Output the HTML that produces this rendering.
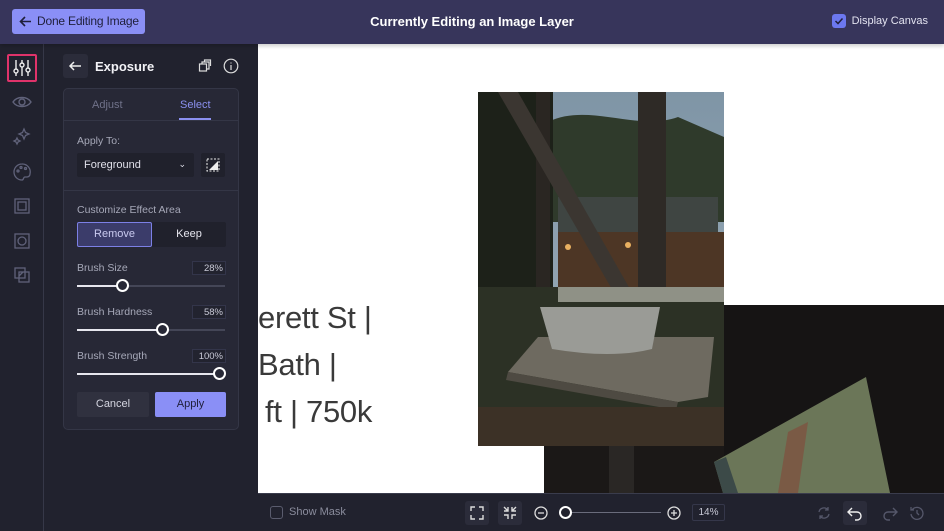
<!DOCTYPE html>
<html><head><meta charset="utf-8"><style>
*{box-sizing:border-box;margin:0;padding:0}
body{width:944px;height:531px;overflow:hidden;font-family:"Liberation Sans",sans-serif;background:#fff;position:relative}
.top{position:absolute;left:0;top:0;width:944px;height:44px;background:#37355b;box-shadow:0 2px 4px rgba(0,0,0,.2);z-index:5}
.done{position:absolute;left:12px;top:9px;width:133px;height:25px;background:#8a8ff6;border-radius:3px;color:#1f1f3a;font-size:12px;line-height:25px;padding-left:25px;white-space:nowrap;letter-spacing:-0.2px}
.done svg{position:absolute;left:7px;top:6px}
.title{position:absolute;left:0;width:944px;top:14px;text-align:center;color:#fff;font-size:13px;font-weight:bold}
.dc{position:absolute;right:16px;top:15px;color:#e3e3f0;font-size:11px}
.dc i{position:absolute;left:-20px;top:-1px;width:14px;height:14px;background:#6c78f0;border-radius:3px}
.rail{position:absolute;left:0;top:44px;width:44px;height:487px;background:#21222e;border-right:1px solid #363848}
.side{position:absolute;left:44px;top:44px;width:214px;height:487px;background:#21222e}
.ic{position:absolute;left:10px;width:24px;height:24px}
.panel{position:absolute;left:19px;top:44px;width:176px;height:342px;background:#272836;border:1px solid #343646;border-radius:5px}
.lbl{position:absolute;color:#a6a8b8;font-size:10.5px}
.val{position:absolute;right:12px;width:34px;height:14px;border:1px solid #33354a;color:#c8c9d6;font-size:9.5px;text-align:right;padding-right:2px;line-height:13px;background:#22232f}
.track{position:absolute;left:13px;width:148px;height:2px;background:#444657}
.track b{position:absolute;left:0;top:0;height:2px;background:#e6e6ee}
.track i{position:absolute;top:-6px;width:13px;height:13px;border-radius:50%;background:#272836;border:2px solid #fff;margin-left:-6px}
.canvas{position:absolute;left:258px;top:44px;width:686px;height:449px;background:#fff;overflow:hidden}
.bot{position:absolute;left:258px;top:493px;width:686px;height:38px;background:#21222e;border-top:1px solid #3a3c4c}
.big{position:absolute;left:0;font-size:31px;color:#3a3a3a;font-family:"Liberation Sans",sans-serif;font-weight:normal;letter-spacing:-0.3px}
.bb{position:absolute;top:7px;width:24px;height:24px;border-radius:3px}
</style></head><body>
<div class="top">
 <div class="done"><svg width="13" height="13" viewBox="0 0 13 13"><path d="M12 6.5H2M6 2L1.5 6.5 6 11" stroke="#1f1f3a" stroke-width="1.6" fill="none"/></svg>Done Editing Image</div>
 <div class="title">Currently Editing an Image Layer</div>
 <div class="dc"><i><svg width="14" height="14" viewBox="0 0 14 14"><path d="M3.5 7l2.5 2.5 4.5-5" stroke="#1f1f3a" stroke-width="1.5" fill="none"/></svg></i>Display Canvas</div>
</div>
<div class="rail">
 <div style="position:absolute;left:7px;top:10px;width:30px;height:28px;border:2px solid #e0336a;border-radius:2px"></div>
 <svg class="ic" style="top:12px" viewBox="0 0 24 24" fill="none" stroke="#eee" stroke-width="1.4"><path d="M6 4v16M12 4v16M18 4v16"/><circle cx="6" cy="15" r="2" fill="#21222e"/><circle cx="12" cy="9" r="2" fill="#21222e"/><circle cx="18" cy="14" r="2" fill="#21222e"/></svg>
 <svg class="ic" style="top:46px" viewBox="0 0 24 24" fill="none" stroke="#60627a" stroke-width="1.4"><path d="M3 12c4-6 14-6 18 0-4 6-14 6-18 0z"/><circle cx="12" cy="12" r="3"/></svg>
 <svg class="ic" style="top:81px" viewBox="0 0 24 24" fill="none" stroke="#60627a" stroke-width="1.3"><path d="M14 4l1.5 3.5L19 9l-3.5 1.5L14 14l-1.5-3.5L9 9l3.5-1.5z"/><path d="M7 13l1 2 2 1-2 1-1 2-1-2-2-1 2-1z"/></svg>
 <svg class="ic" style="top:116px" viewBox="0 0 24 24" fill="none" stroke="#60627a" stroke-width="1.3"><path d="M12 4a8 8 0 1 0 0 16c2 0 1-3 3-3h2a3 3 0 0 0 3-3 8 8 0 0 0-8-10z"/><circle cx="8" cy="11" r="1"/><circle cx="11" cy="7.5" r="1"/><circle cx="15.5" cy="8.5" r="1"/></svg>
 <svg class="ic" style="top:150px" viewBox="0 0 24 24" fill="none" stroke="#60627a" stroke-width="1.3"><rect x="5" y="5" width="14" height="14"/><rect x="8" y="8" width="8" height="8"/></svg>
 <svg class="ic" style="top:185px" viewBox="0 0 24 24" fill="none" stroke="#60627a" stroke-width="1.3"><rect x="5" y="5" width="14" height="14"/><circle cx="12" cy="12" r="4"/></svg>
 <svg class="ic" style="top:219px" viewBox="0 0 24 24" fill="none" stroke="#60627a" stroke-width="1.3"><rect x="5" y="5" width="10" height="10"/><rect x="9" y="9" width="10" height="10"/><path d="M9 13l4-4"/></svg>
</div>
<div class="side">
 <div style="position:absolute;left:19px;top:10px;width:25px;height:24px;background:#2b2c3a;border-radius:3px"><svg width="25" height="24" viewBox="0 0 25 24"><path d="M18 12H7M11 8l-4 4 4 4" stroke="#eee" stroke-width="1.5" fill="none"/></svg></div>
 <div style="position:absolute;left:51px;top:15px;color:#f2f2f6;font-size:13px;font-weight:bold">Exposure</div>
 <svg style="position:absolute;left:154px;top:15px" width="14" height="14" viewBox="0 0 14 14" fill="none" stroke="#ddd" stroke-width="1.2"><rect x="1.5" y="5" width="7" height="7"/><path d="M4 5V3h7v7h-2.5M6.5 3V1h6v6"/></svg>
 <svg style="position:absolute;left:179px;top:14px" width="16" height="16" viewBox="0 0 16 16" fill="none" stroke="#ddd" stroke-width="1.2"><circle cx="8" cy="8" r="6.8"/><path d="M8 7v5M8 4.5v1"/></svg>
 <div class="panel">
  <div style="position:absolute;left:0;top:0;width:100%;height:32px;border-bottom:1px solid #343646"></div>
  <div class="lbl" style="left:28px;top:10px;color:#70728a;font-size:11px">Adjust</div>
  <div class="lbl" style="left:116px;top:10px;color:#8b90f0;font-size:11px">Select</div>
  <div style="position:absolute;left:115px;top:29px;width:32px;height:2px;background:#8b90f0"></div>
  <div class="lbl" style="left:13px;top:46px">Apply To:</div>
  <div style="position:absolute;left:13px;top:64px;width:117px;height:24px;background:#20212c;border-radius:2px;color:#e0e0ea;font-size:11px;line-height:24px;padding-left:7px">Foreground<span style="position:absolute;right:8px;top:-1px;font-size:9px">⌄</span></div>
  <div style="position:absolute;left:137px;top:64px;width:24px;height:24px;background:#20212c;border-radius:2px"><svg width="24" height="24" viewBox="0 0 24 24"><rect x="6" y="6" width="12" height="12" fill="none" stroke="#eee" stroke-dasharray="2 1.5"/><path d="M8 17l9-9v9z" fill="#eee"/></svg></div>
  <div style="position:absolute;left:0;top:101px;width:100%;height:1px;background:#343646"></div>
  <div class="lbl" style="left:13px;top:115px">Customize Effect Area</div>
  <div style="position:absolute;left:13px;top:133px;width:149px;height:25px;background:#20212c;border-radius:2px"></div>
  <div style="position:absolute;left:13px;top:133px;width:75px;height:25px;background:#3b3c6a;border:1px solid #7c80e6;border-radius:2px;color:#c9caf0;font-size:11px;text-align:center;line-height:23px">Remove</div>
  <div style="position:absolute;left:88px;top:133px;width:74px;height:25px;color:#e5e5ee;font-size:11px;text-align:center;line-height:25px">Keep</div>
  <div class="lbl" style="left:13px;top:173px">Brush Size</div><div class="val" style="top:172px">28%</div>
  <div class="track" style="top:196px"><b style="width:45px"></b><i style="left:45px"></i></div>
  <div class="lbl" style="left:13px;top:217px">Brush Hardness</div><div class="val" style="top:216px">58%</div>
  <div class="track" style="top:240px"><b style="width:85px"></b><i style="left:85px"></i></div>
  <div class="lbl" style="left:13px;top:261px">Brush Strength</div><div class="val" style="top:260px">100%</div>
  <div class="track" style="top:284px"><b style="width:142px"></b><i style="left:142px"></i></div>
  <div style="position:absolute;left:13px;top:303px;width:72px;height:25px;background:#30313f;border-radius:2px;color:#d4d5e0;font-size:11px;text-align:center;line-height:25px">Cancel</div>
  <div style="position:absolute;left:91px;top:303px;width:71px;height:25px;background:#8a8ff6;border-radius:2px;color:#1f1f3a;font-size:11px;text-align:center;line-height:25px">Apply</div>
 </div>
</div>
<div class="canvas">
 <div class="big" style="top:256px">erett St |</div>
 <div class="big" style="top:303px">Bath |</div>
 <div class="big" style="top:350px;left:7px">ft | 750k</div>
 <svg style="position:absolute;left:220px;top:48px" width="466" height="401" viewBox="0 0 466 401">
  <defs><linearGradient id="sky" x1="0" y1="0" x2="0" y2="1"><stop offset="0" stop-color="#7f95a6"/><stop offset="1" stop-color="#9fb0ba"/></linearGradient></defs>
  <rect x="0" y="0" width="246" height="354" fill="url(#sky)"/>
  <path d="M70 30C110 10 160 40 200 25L246 45V130H60z" fill="#2f3a2b"/>
  <rect x="0" y="0" width="75" height="354" fill="#1d2119"/>
  <rect x="80" y="105" width="160" height="40" fill="#3f4542"/>
  <rect x="80" y="140" width="166" height="55" fill="#4d3625"/>
  <circle cx="90" cy="155" r="3" fill="#e9b060"/><circle cx="150" cy="153" r="3" fill="#e9b060"/>
  <rect x="160" y="0" width="28" height="260" fill="#2e2a26"/>
  <rect x="58" y="0" width="14" height="354" fill="#2a2622"/>
  <path d="M20 0L40 0 165 220 150 225z" fill="#3b3631"/>
  <rect x="0" y="195" width="246" height="159" fill="#2c3125"/>
  <rect x="80" y="195" width="166" height="15" fill="#8f9186"/>
  <path d="M30 280L60 245 236 245 230 305 200 310z" fill="#6e6a60"/>
  <path d="M30 280L200 310 198 318 28 288z" fill="#4e4a42"/>
  <path d="M62 215h120l-8 42q-40 10-100 0z" fill="#9a9b96"/>
  <rect x="0" y="315" width="246" height="39" fill="#3c3126"/>
  <rect x="246" y="213" width="220" height="188" fill="#161414"/>
  <rect x="66" y="354" width="180" height="47" fill="#1b1817"/>
  <rect x="131" y="354" width="25" height="47" fill="#2a2725"/>
  <path d="M236 370L388 285 412 401 245 401z" fill="#6b7658"/>
  <path d="M236 370L248 365 260 401 245 401z" fill="#3c4a48"/>
  <path d="M300 401L310 340 330 330 320 401z" fill="#7a5a45"/>
 </svg>
</div>
<div class="bot">
 <div style="position:absolute;left:12px;top:12px;width:13px;height:13px;border:1px solid #5a5c6e;border-radius:3px"></div>
 <div style="position:absolute;left:31px;top:12px;color:#8a8c9c;font-size:11px">Show Mask</div>
 <div class="bb" style="left:207px;background:#2b2c3a"><svg width="24" height="24" viewBox="0 0 24 24" fill="none" stroke="#ddd" stroke-width="1.4"><path d="M6 10V6h4M14 6h4v4M18 14v4h-4M10 18H6v-4"/></svg></div>
 <div class="bb" style="left:240px;background:#2b2c3a"><svg width="24" height="24" viewBox="0 0 24 24" fill="none" stroke="#ddd" stroke-width="1.4"><path d="M6 10h4V6M14 6v4h4M18 14h-4v4M10 18v-4H6M6 6l4 4M18 6l-4 4"/></svg></div>
 <svg style="position:absolute;left:276px;top:12px" width="14" height="14" viewBox="0 0 14 14" fill="none" stroke="#ddd" stroke-width="1.3"><circle cx="7" cy="7" r="6"/><path d="M4 7h6"/></svg>
 <div style="position:absolute;left:307px;top:18px;width:96px;height:1px;background:#6a6c7c"></div>
 <div style="position:absolute;left:301px;top:12px;width:13px;height:13px;border-radius:50%;border:2px solid #fff;background:#21222e"></div>
 <svg style="position:absolute;left:409px;top:12px" width="14" height="14" viewBox="0 0 14 14" fill="none" stroke="#ddd" stroke-width="1.3"><circle cx="7" cy="7" r="6"/><path d="M4 7h6M7 4v6"/></svg>
 <div style="position:absolute;left:434px;top:10px;width:33px;height:17px;border:1px solid #35374a;border-radius:2px;color:#c8c9d6;font-size:10px;text-align:center;line-height:15px">14%</div>
 <svg style="position:absolute;left:558px;top:11px" width="16" height="16" viewBox="0 0 16 16" fill="none" stroke="#55576a" stroke-width="1.3"><path d="M3 7a5 5 0 0 1 9-2M13 9a5 5 0 0 1-9 2M12 2v3H9M4 14v-3h3"/></svg>
 <div class="bb" style="left:585px;background:#2b2c3a"><svg width="24" height="24" viewBox="0 0 24 24" fill="none" stroke="#eee" stroke-width="1.4"><path d="M9 7L5 11l4 4M5 11h9a4 4 0 0 1 0 8h-2"/></svg></div>
 <svg style="position:absolute;left:620px;top:7px" width="24" height="24" viewBox="0 0 24 24" fill="none" stroke="#55576a" stroke-width="1.4"><path d="M15 7l4 4-4 4M19 11h-9a4 4 0 0 0 0 8h2"/></svg>
 <svg style="position:absolute;left:651px;top:11px" width="16" height="16" viewBox="0 0 16 16" fill="none" stroke="#55576a" stroke-width="1.3"><path d="M3 5a6 6 0 1 1-1 4M2 2v3h3M8 5v3l2 2"/></svg>
</div>
</body></html>
